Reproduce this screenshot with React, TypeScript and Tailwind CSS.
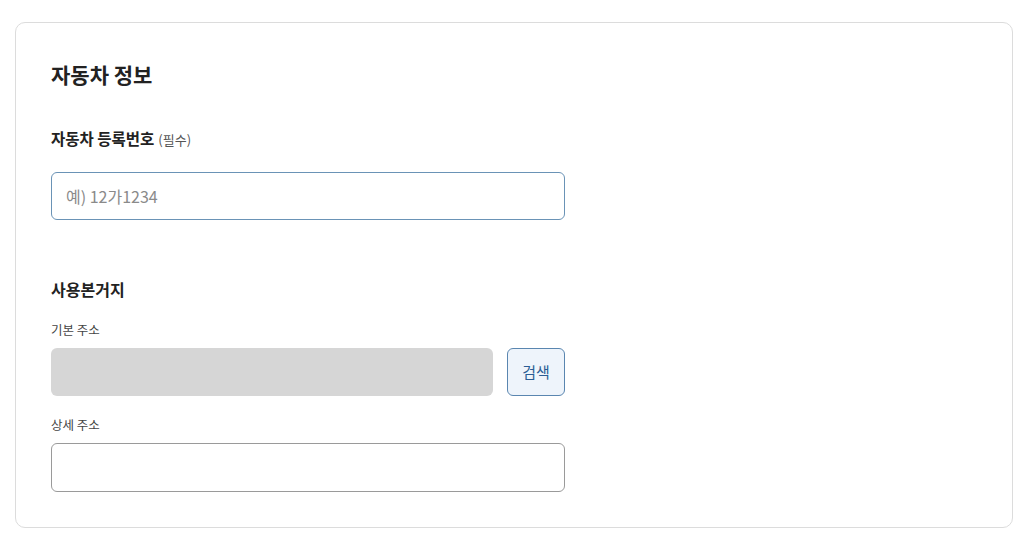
import React from "react";

export default function App() {
  return (
    <div
      className="min-h-[537px] w-[1024px] bg-white pt-[22px]"
      style={{ fontFamily: '"Noto Sans CJK KR", "Noto Sans", sans-serif' }}
    >
      <div className="ml-[15px] h-[506px] w-[998px] rounded-[10px] border border-[#dcdcdc] px-[35px] pt-[37px]">
        <h2 className="h-[28px] text-[21px] font-bold leading-[28px] text-[#222]">자동차 정보</h2>

        <div className="mt-[39px] flex h-[22px] items-baseline leading-[22px]">
          <span className="text-[15.5px] font-bold text-[#222]">자동차 등록번호</span>
          <span className="ml-[4px] text-[13px] text-[#555]">(필수)</span>
        </div>

        <input
          className="mt-[23px] block h-[48px] w-[514px] rounded-[6px] border border-[#6a93b6] px-[14px] text-[16px] text-[#333] outline-none placeholder:text-[#8a8a8a]"
          placeholder="예) 12가1234"
        />

        <h3 className="mt-[57px] h-[24px] text-[16px] font-bold leading-[24px] text-[#222]">사용본거지</h3>

        <div className="mt-[19px] h-[20px] text-[12.5px] leading-[20px] text-[#444]">기본 주소</div>
        <div className="mt-[8px] flex w-[514px] gap-[14px]">
          <div className="h-[48px] w-[442px] rounded-[6px] bg-[#d6d6d6]" />
          <button className="h-[48px] w-[58px] rounded-[6px] border border-[#5a86b0] bg-[#eef4fb] text-[15px] text-[#2a5d94]">
            검색
          </button>
        </div>

        <div className="mt-[19px] h-[20px] text-[12.5px] leading-[20px] text-[#444]">상세 주소</div>
        <input className="mt-[8px] block h-[49px] w-[514px] rounded-[6px] border border-[#9a9a9a] px-[14px] text-[15px] outline-none" />
      </div>
    </div>
  );
}
